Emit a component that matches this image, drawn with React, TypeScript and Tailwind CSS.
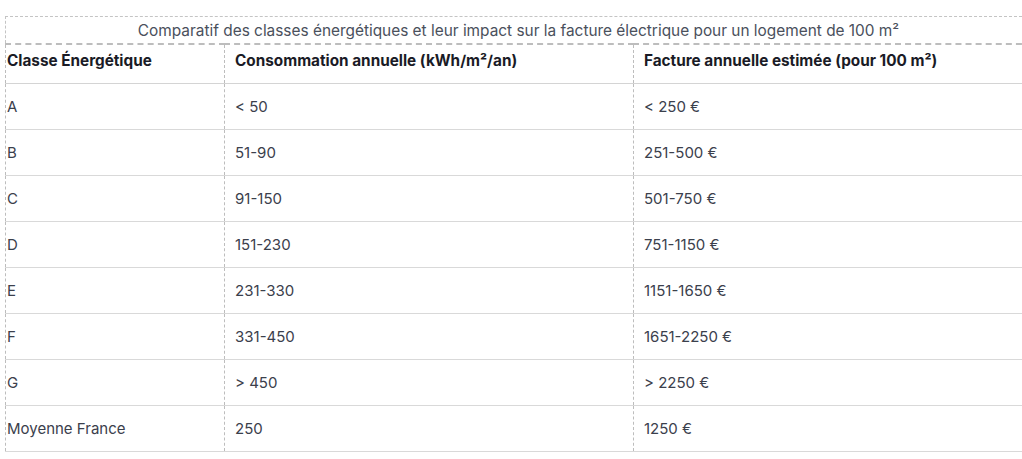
const rows: [string, string, string][] = [
  ['A', '< 50', '< 250 €'],
  ['B', '51-90', '251-500 €'],
  ['C', '91-150', '501-750 €'],
  ['D', '151-230', '751-1150 €'],
  ['E', '231-330', '1151-1650 €'],
  ['F', '331-450', '1651-2250 €'],
  ['G', '> 450', '> 2250 €'],
  ['Moyenne France', '250', '1250 €'],
];

export default function App() {
  return (
    <div className="h-[459px] w-full overflow-hidden bg-white pl-[5px] pt-4 font-['Inter',sans-serif]">
      <table className="w-[1027px] table-fixed border-collapse text-left">
        <caption className="h-[27px] border-x border-t border-dashed border-[#c4c4c4] pt-[4px] text-[15.4px] leading-[20px] text-[#4a505c]">
          Comparatif des classes énergétiques et leur impact sur la facture électrique pour un logement de 100 m²
        </caption>
        <colgroup>
          <col className="w-[219px]" />
          <col className="w-[409px]" />
          <col />
        </colgroup>
        <thead>
          <tr className="h-[39px] border-t-2 border-b border-t-[#bdbdbd] border-b-[#d4d4d4] [border-top-style:dashed]">
            <th className="border-l border-dashed border-[#bdbdbd] pb-[4px] pl-[1px] text-[15.3px] font-bold text-[#1a1b26]">
              Classe Énergétique
            </th>
            <th className="border-l border-dashed border-[#bdbdbd] pb-[4px] pl-[10px] text-[15.3px] font-bold text-[#1a1b26]">
              Consommation annuelle (kWh/m²/an)
            </th>
            <th className="border-l border-dashed border-[#bdbdbd] pb-[4px] pl-[10px] text-[15.3px] font-bold text-[#1a1b26]">
              Facture annuelle estimée (pour 100 m²)
            </th>
          </tr>
        </thead>
        <tbody>
          {rows.map((r) => (
            <tr key={r[0]} className="h-[46px] border-b border-[#d9d9d9]">
              <td className="border-l border-dashed border-l-[#bdbdbd] pl-[1px] pt-[2px] text-[15px] text-[#3b404c]">{r[0]}</td>
              <td className="border-l border-dashed border-l-[#bdbdbd] pl-[10px] pt-[2px] text-[15px] text-[#3b404c]">{r[1]}</td>
              <td className="border-l border-dashed border-l-[#bdbdbd] pl-[10px] pt-[2px] text-[15px] text-[#3b404c]">{r[2]}</td>
            </tr>
          ))}
        </tbody>
      </table>
    </div>
  );
}
